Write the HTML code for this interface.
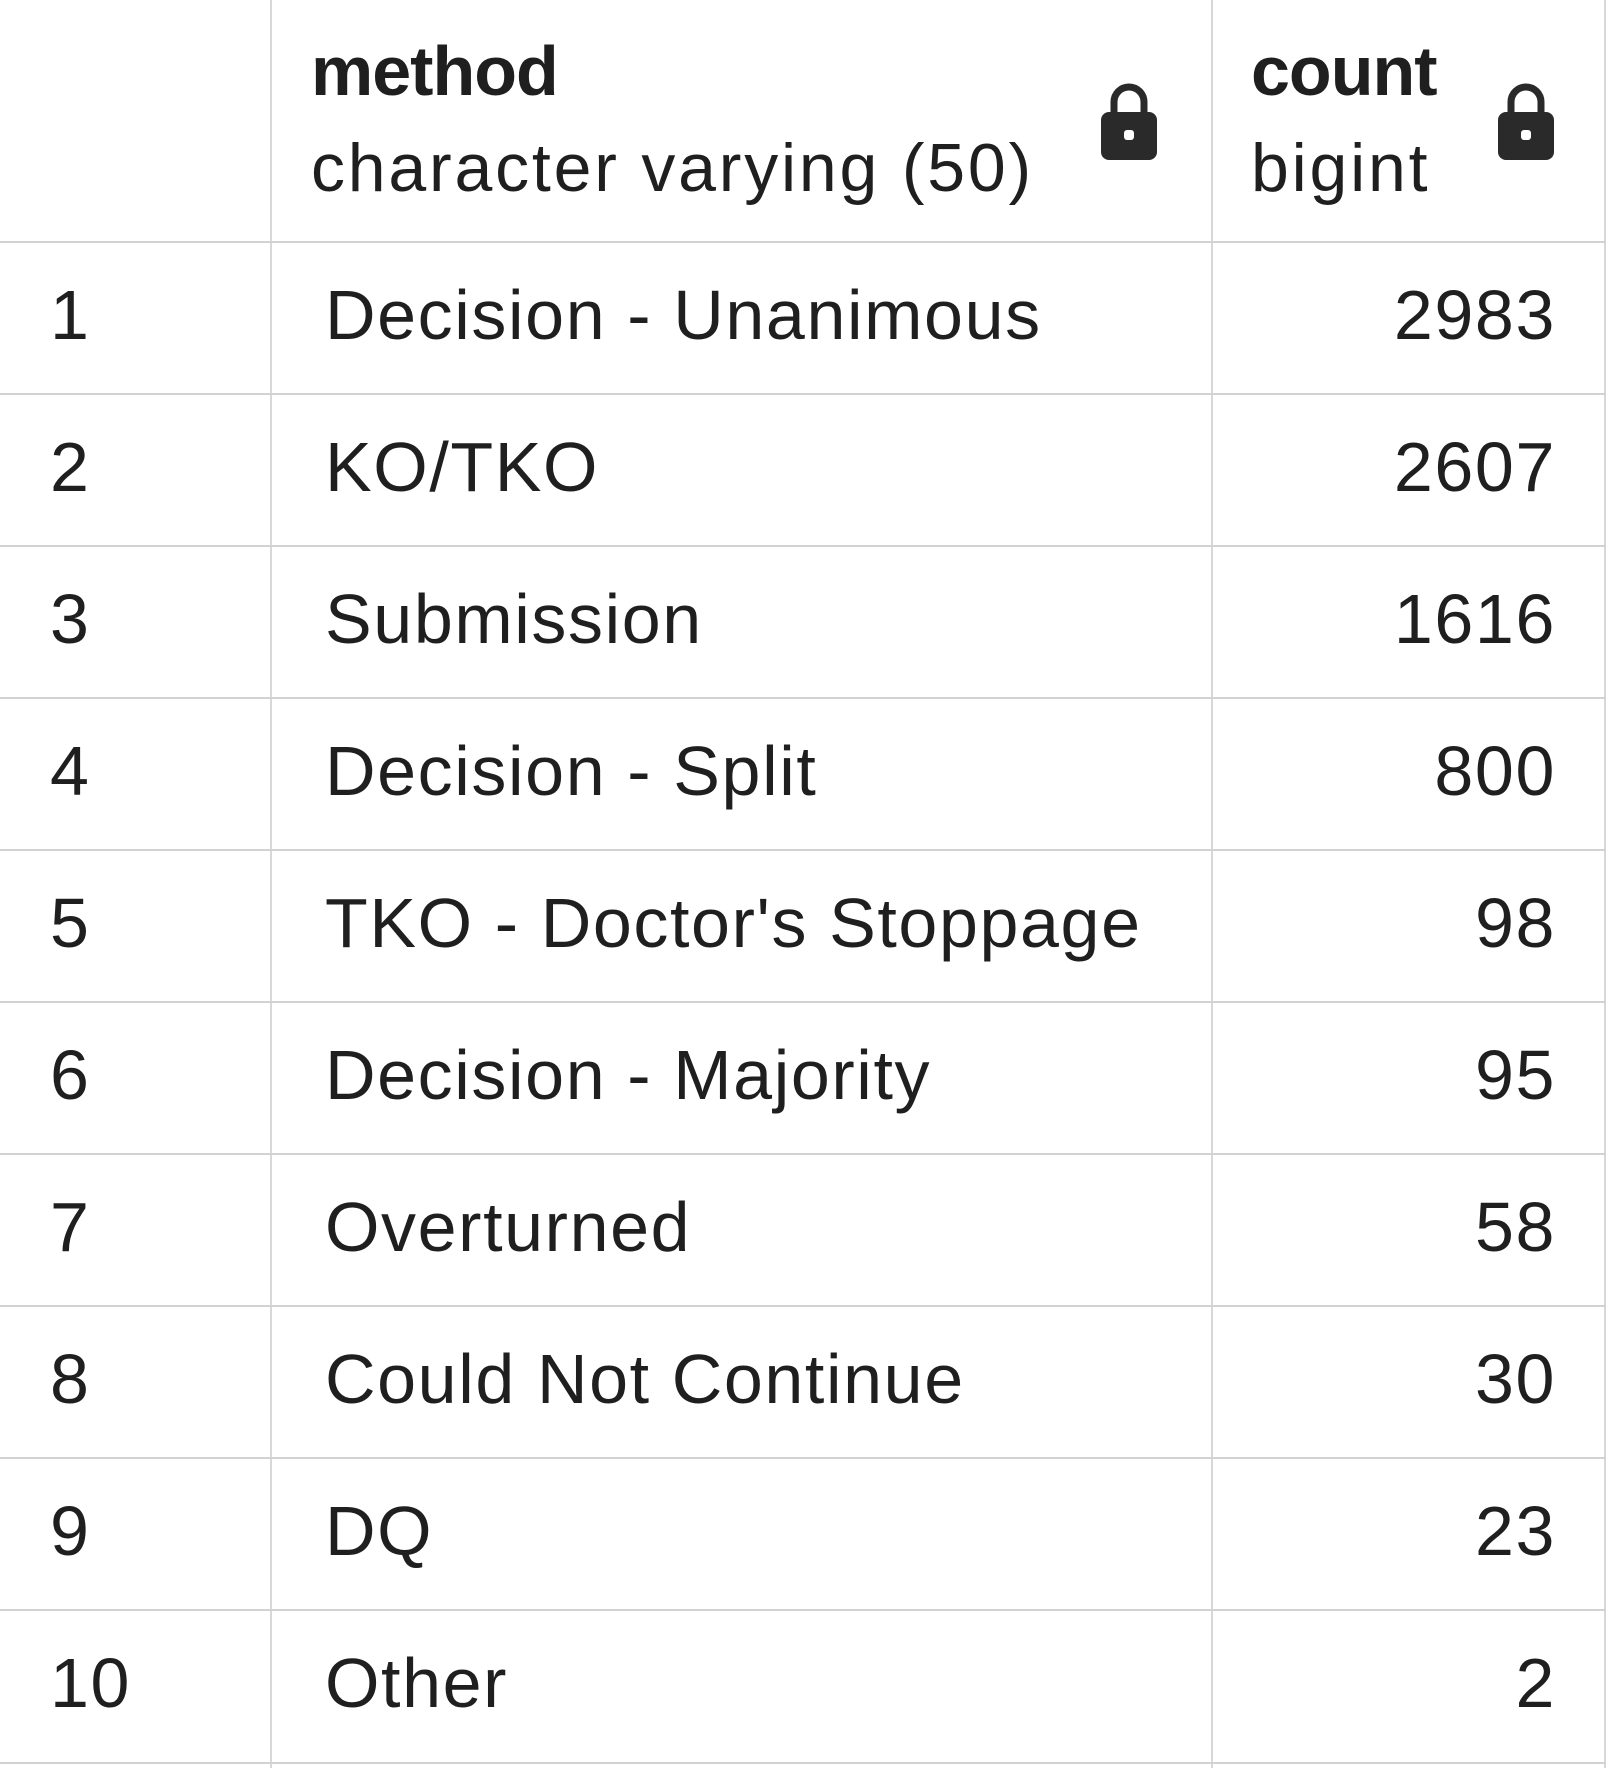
<!DOCTYPE html>
<html><head><style>
html,body{margin:0;padding:0;background:#fff;}
body{width:1608px;height:1768px;position:relative;overflow:hidden;font-family:"Liberation Sans",sans-serif;color:#1f1f1f;}
.h{position:absolute;background:#d2d2d2;height:2px;left:0;width:1606px;}
.v{position:absolute;background:#d8d8d8;width:2px;top:0;height:1768px;}
.t{position:absolute;font-size:70px;line-height:1;white-space:nowrap;letter-spacing:1.6px;}
.r{text-align:right;}
</style></head><body>
<div class="v" style="left:270px"></div>
<div class="v" style="left:1211px"></div>
<div class="v" style="left:1604px"></div>
<div class="h" style="top:241px"></div>
<div class="h" style="top:393px"></div>
<div class="h" style="top:545px"></div>
<div class="h" style="top:697px"></div>
<div class="h" style="top:849px"></div>
<div class="h" style="top:1001px"></div>
<div class="h" style="top:1153px"></div>
<div class="h" style="top:1305px"></div>
<div class="h" style="top:1457px"></div>
<div class="h" style="top:1609px"></div>
<div class="h" style="top:1762px"></div>

<div class="t" style="left:311px;top:36px;font-weight:bold;font-size:70px;letter-spacing:-1px">method</div>
<div class="t" style="left:311px;top:134px;font-size:68px;letter-spacing:2.8px">character varying (50)</div>
<div class="t" style="left:1251px;top:36px;font-weight:bold;font-size:70px;letter-spacing:-1px">count</div>
<div class="t" style="left:1251px;top:134px;font-size:68px;letter-spacing:2.8px">bigint</div>
<svg style="position:absolute;left:1100px;top:82px" width="58" height="78" viewBox="0 0 58 78"><path d="M14 32 V20 a15 15 0 0 1 30 0 V32" fill="none" stroke="#2a2a2a" stroke-width="7"/><rect x="1" y="30" width="56" height="48" rx="8" fill="#2a2a2a"/><rect x="24" y="48" width="10" height="10" rx="3" fill="#fff"/></svg>
<svg style="position:absolute;left:1497px;top:82px" width="58" height="78" viewBox="0 0 58 78"><path d="M14 32 V20 a15 15 0 0 1 30 0 V32" fill="none" stroke="#2a2a2a" stroke-width="7"/><rect x="1" y="30" width="56" height="48" rx="8" fill="#2a2a2a"/><rect x="24" y="48" width="10" height="10" rx="3" fill="#fff"/></svg>

<div class="t" style="left:50px;top:280px">1</div><div class="t" style="left:325px;top:280px">Decision - Unanimous</div><div class="t r" style="right:52px;top:280px">2983</div>
<div class="t" style="left:50px;top:432px">2</div><div class="t" style="left:325px;top:432px">KO/TKO</div><div class="t r" style="right:52px;top:432px">2607</div>
<div class="t" style="left:50px;top:584px">3</div><div class="t" style="left:325px;top:584px">Submission</div><div class="t r" style="right:52px;top:584px">1616</div>
<div class="t" style="left:50px;top:736px">4</div><div class="t" style="left:325px;top:736px">Decision - Split</div><div class="t r" style="right:52px;top:736px">800</div>
<div class="t" style="left:50px;top:888px">5</div><div class="t" style="left:325px;top:888px">TKO - Doctor's Stoppage</div><div class="t r" style="right:52px;top:888px">98</div>
<div class="t" style="left:50px;top:1040px">6</div><div class="t" style="left:325px;top:1040px">Decision - Majority</div><div class="t r" style="right:52px;top:1040px">95</div>
<div class="t" style="left:50px;top:1192px">7</div><div class="t" style="left:325px;top:1192px">Overturned</div><div class="t r" style="right:52px;top:1192px">58</div>
<div class="t" style="left:50px;top:1344px">8</div><div class="t" style="left:325px;top:1344px">Could Not Continue</div><div class="t r" style="right:52px;top:1344px">30</div>
<div class="t" style="left:50px;top:1496px">9</div><div class="t" style="left:325px;top:1496px">DQ</div><div class="t r" style="right:52px;top:1496px">23</div>
<div class="t" style="left:50px;top:1648px">10</div><div class="t" style="left:325px;top:1648px">Other</div><div class="t r" style="right:52px;top:1648px">2</div>
</body></html>
